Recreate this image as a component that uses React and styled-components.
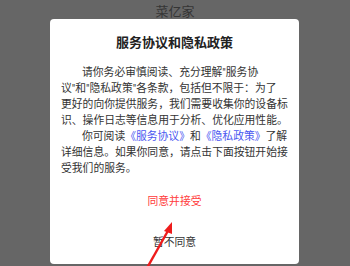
import React from "react";
import styled, { createGlobalStyle } from "styled-components";

const Global = createGlobalStyle`
  html, body { margin: 0; padding: 0; }
  body {
    background: #666666;
    width: 350px;
    height: 266px;
    overflow: hidden;
    font-family: Roboto, "Noto Sans CJK SC", sans-serif;
  }
`;

const Page = styled.div`
  position: relative;
  width: 350px;
  height: 266px;
  overflow: hidden;
`;

const Header = styled.div`
  height: 19px;
  line-height: 24px;
  text-align: center;
  font-size: 13px;
  color: #353535;
`;

const Card = styled.div`
  margin-left: 50px;
  width: 249px;
  height: 245px;
  background: #ffffff;
  border-radius: 4px;
  box-sizing: border-box;
  padding: 0 11px;
  display: flex;
  flex-direction: column;
`;

const Title = styled.div`
  padding-top: 16px;
  line-height: 16px;
  text-align: center;
  font-size: 13px;
  font-weight: bold;
  color: #222;
`;

const Body = styled.div`
  margin-top: 14px;
  font-size: 10.8px;
  line-height: 16px;
  color: #333;
`;

const Line = styled.div`
  white-space: nowrap;
  padding-left: ${(p) => (p.$indent ? "21px" : "0")};
`;

const Link = styled.span`
  color: #4a57f0;
`;

const Button = styled.div`
  height: 41px;
  display: flex;
  align-items: center;
  justify-content: center;
  font-size: 10.8px;
  color: ${(p) => (p.$primary ? "#ff3b3b" : "#333")};
`;

const Actions = styled.div`
  margin-top: 2px;
  display: flex;
  flex-direction: column;
`;

const Arrow = styled.svg`
  position: absolute;
  left: 0;
  top: 0;
  pointer-events: none;
`;

export default function App() {
  return (
    <>
      <Global />
      <Page>
        <Header>菜亿家</Header>
        <Card>
          <Title>服务协议和隐私政策</Title>
          <Body>
            <Line $indent>请你务必审慎阅读、充分理解"服务协</Line>
            <Line>议"和"隐私政策"各条款，包括但不限于：为了</Line>
            <Line>更好的向你提供服务，我们需要收集你的设备标</Line>
            <Line>识、操作日志等信息用于分析、优化应用性能。</Line>
            <Line $indent>
              你可阅读<Link>《服务协议》</Link>和<Link>《隐私政策》</Link>了解
            </Line>
            <Line>详细信息。如果你同意，请点击下面按钮开始接</Line>
            <Line>受我们的服务。</Line>
          </Body>
          <Actions>
            <Button $primary>同意并接受</Button>
            <Button>暂不同意</Button>
          </Actions>
        </Card>
        <Arrow width="350" height="266" viewBox="0 0 350 266">
          <line x1="147" y1="268" x2="169" y2="229" stroke="#ee1c1c" strokeWidth="2.4" />
          <polygon points="172,222 164,231 172,234" fill="#ee1c1c" />
        </Arrow>
      </Page>
    </>
  );
}
